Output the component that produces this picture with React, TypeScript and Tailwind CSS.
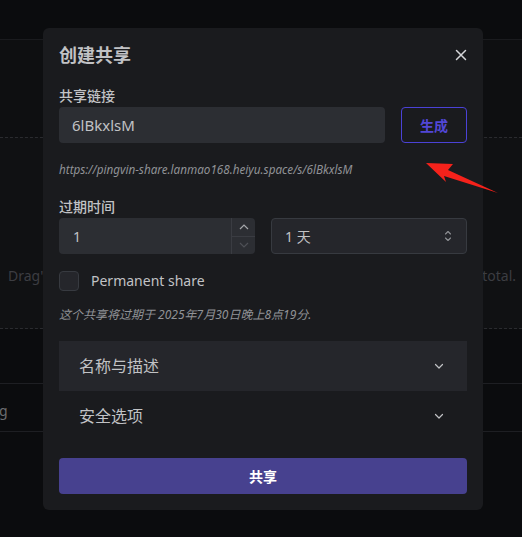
import React from "react";

const font = { fontFamily: '"Noto Sans", "Noto Sans CJK SC", sans-serif' };

function Chevron({ className = "" }: { className?: string }) {
  return (
    <svg width="12" height="12" viewBox="0 0 12 12" className={className} fill="none">
      <path d="M2.5 4.5L6 8L9.5 4.5" stroke="#c1c2c5" strokeWidth="1.2" strokeLinecap="round" strokeLinejoin="round" />
    </svg>
  );
}

export default function App() {
  return (
    <div className="relative w-[522px] h-[537px] overflow-hidden bg-[#0b0c0e]" style={font}>
      {/* background page */}
      <div className="flex flex-col">
        <div className="h-[40px] border-b border-[#1a1b1e]" />
        <div className="h-[97px] bg-[#0e0f11]" />
        <div className="h-[192px] border-y border-dashed border-[#2a2b2f] bg-[#101113] flex items-start justify-between px-[8px] pt-[128px] text-[14px] leading-[20px] text-[#3c3d42]">
          <span>Drag'n</span>
          <span className="-mr-[2px]">total.</span>
        </div>
        <div className="h-[55px] border-b border-[#1e1f23]" />
        <div className="h-[48px] border-b border-[#1e1f23] flex items-center text-[14px] text-[#6b6c70]">
          <span className="-ml-[1px] mt-[6px]">g</span>
        </div>
      </div>

      {/* modal */}
      <div className="absolute left-[43px] top-[28px] w-[440px] h-[482px] rounded-[6px] bg-[#1a1b1e] px-[16px] pt-[16px] flex flex-col">
        <div className="flex items-center justify-between h-[22px]">
          <span className="text-[18px] font-bold text-[#c1c2c5] leading-[22px]">创建共享</span>
          <svg width="12" height="12" viewBox="0 0 12 12">
            <path d="M1.5 1.5L10.5 10.5M10.5 1.5L1.5 10.5" stroke="#d5d6d9" strokeWidth="1.5" strokeLinecap="round" />
          </svg>
        </div>

        <div className="mt-[20px] text-[14px] font-medium text-[#c1c2c5] leading-[20px]">共享链接</div>
        <div className="mt-[1px] flex gap-[16px]">
          <div className="w-[326px] h-[36px] rounded-[4px] bg-[#2c2e33] flex items-center pl-[13px] text-[15px] text-[#c1c2c5]">
            6lBkxlsM
          </div>
          <div className="w-[66px] h-[36px] rounded-[4px] border border-[#4b42d6] flex items-center justify-center text-[14px] font-bold text-[#5247d6]">
            生成
          </div>
        </div>
        <div className="mt-[18px] text-[11.7px] italic text-[#909296] leading-[16px]">
          https://pingvin-share.lanmao168.heiyu.space/s/6lBkxlsM
        </div>

        <div className="mt-[20px] text-[14px] font-medium text-[#c1c2c5] leading-[20px]">过期时间</div>
        <div className="mt-[1px] flex gap-[16px]">
          <div className="w-[196px] h-[36px] rounded-[4px] bg-[#2c2e33] flex">
            <div className="flex-1 flex items-center pl-[14px] text-[14px] text-[#c1c2c5]">1</div>
            <div className="w-[24px] border-l border-[#3a3c42] flex flex-col">
              <div className="flex-1 border-b border-[#3a3c42] flex items-center justify-center">
                <svg width="10" height="6" viewBox="0 0 10 6" fill="none">
                  <path d="M1 5L5 1L9 5" stroke="#a6a7ab" strokeWidth="1.2" />
                </svg>
              </div>
              <div className="flex-1 flex items-center justify-center">
                <svg width="10" height="6" viewBox="0 0 10 6" fill="none">
                  <path d="M1 1L5 5L9 1" stroke="#4e5056" strokeWidth="1.2" />
                </svg>
              </div>
            </div>
          </div>
          <div className="w-[196px] h-[36px] rounded-[4px] bg-[#25262b] border border-[#373a40] flex items-center justify-between pl-[13px] pr-[14px] text-[14px] text-[#c1c2c5]">
            <span>1 天</span>
            <svg width="8" height="14" viewBox="0 0 8 14" fill="none">
              <path d="M1.5 5L4 2.5L6.5 5M1.5 9L4 11.5L6.5 9" stroke="#909296" strokeWidth="1.1" strokeLinecap="round" strokeLinejoin="round" />
            </svg>
          </div>
        </div>

        <div className="mt-[16px] flex items-center">
          <div className="w-[20px] h-[20px] rounded-[4px] border border-[#373a40] bg-[#25262b]" />
          <span className="ml-[12px] text-[14px] text-[#c1c2c5]">Permanent share</span>
        </div>

        <div className="mt-[16px] text-[12px] italic text-[#909296] leading-[16px]">
          这个共享将过期于 2025年7月30日晚上8点19分.
        </div>

        <div className="mt-[18px] flex flex-col">
          <div className="h-[50px] bg-[#25262b] flex items-center justify-between pl-[20px] pr-[22px] text-[16px] text-[#c1c2c5]">
            <span>名称与描述</span>
            <Chevron />
          </div>
          <div className="h-[50px] flex items-center justify-between pl-[20px] pr-[22px] text-[16px] text-[#c1c2c5]">
            <span>安全选项</span>
            <Chevron />
          </div>
        </div>

        <div className="mt-[17px] h-[36px] rounded-[4px] bg-[#47418f] flex items-center justify-center text-[14px] font-bold text-white">
          共享
        </div>
      </div>

      {/* red annotation arrow */}
      <svg className="absolute left-0 top-0" width="522" height="537" viewBox="0 0 522 537">
        <polygon points="426,163 453,164 448,170 498,193 444,176 446,182" fill="#f5221b" />
      </svg>
    </div>
  );
}
